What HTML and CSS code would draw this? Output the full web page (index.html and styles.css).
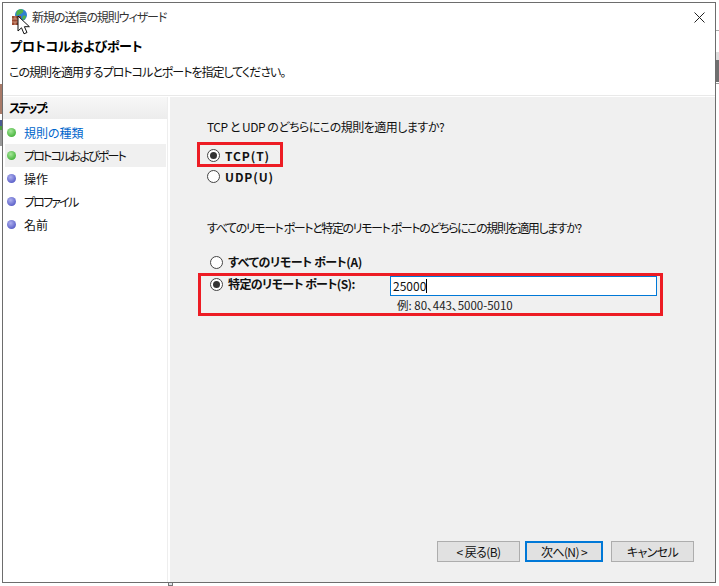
FILE: index.html
```html
<!DOCTYPE html>
<html lang="ja">
<head>
<meta charset="utf-8">
<title>新規の送信の規則ウィザード</title>
<link rel="stylesheet" href="styles.css">
</head>
<body>
<div class="bg-left"></div>
<div class="bg-right"></div>
<div class="bg-bottom"></div>
<div class="window">
  <header class="head">
    <div class="titlebar">
      <svg class="app-icon" width="17" height="17" viewBox="0 0 17 17">
        <circle cx="10" cy="6" r="6" fill="#2f7fd0"/>
        <path d="M6 2c2-2 5-2 6-1 1 2-1 3-2 4-2 0-3 1-4 2-1-1-1-3 0-5zM12 7c2-1 3 0 3 1-1 2-2 3-3 3-1-1-1-3 0-4z" fill="#4fb34a"/>
        <rect x="1" y="7" width="9" height="9" fill="#9a4a32"/>
        <path d="M1 10h9M1 13h9M4 7v3M7 10v3M4 13v3" stroke="#d9a68e" stroke-width=".8" fill="none"/>
      </svg>
      <span class="title">新規の送信の規則ウィザード</span>
      <svg class="close" width="11" height="11" viewBox="0 0 11 11"><path d="M.5.5l10 10M10.500.5l-10 10" stroke="#222" stroke-width="1" fill="none"/></svg>
    </div>
    <h1 class="page-title">プロトコルおよびポート</h1>
    <p class="page-desc">この規則を適用するプロトコルとポートを指定してください。</p>
  </header>
  <div class="body">
    <nav class="steps">
      <div class="steps-head">ステップ:</div>
      <ul class="step-list">
        <li class="step"><i class="dot green"></i><span class="link">規則の種類</span></li>
        <li class="step current"><i class="dot green"></i><span class="kana">プロトコルおよびポート</span></li>
        <li class="step"><i class="dot blue"></i>操作</li>
        <li class="step"><i class="dot blue"></i><span class="kana">プロファイル</span></li>
        <li class="step"><i class="dot blue"></i>名前</li>
      </ul>
    </nav>
    <main class="main">
      <p class="question q1">TCP と UDP のどちらにこの規則を適用しますか?</p>
      <div class="radio-row proto first"><i class="radio on"></i><span class="label latin">TCP(T)</span></div>
      <div class="radio-row proto"><i class="radio"></i><span class="label latin">UDP(U)</span></div>
      <p class="question q2">すべてのリモート ポートと特定のリモート ポートのどちらにこの規則を適用しますか?</p>
      <div class="radio-row port"><i class="radio"></i><span class="label">すべてのリモート ポート(A)</span></div>
      <div class="radio-row port specific">
        <i class="radio on"></i><span class="label wide">特定のリモート ポート(S):</span>
        <div class="input"><span>25000</span><b class="caret"></b></div>
      </div>
      <p class="example">例: 80、443、5000-5010</p>
      <footer class="buttons">
        <button class="btn">&lt; 戻る(B)</button>
        <button class="btn primary">次へ(N) &gt;</button>
        <button class="btn">キャンセル</button>
      </footer>
    </main>
  </div>
  <div class="mark mark-a"></div>
  <div class="mark mark-b"></div>
</div>
<svg class="cursor" width="14" height="21" viewBox="0 0 14 21"><path d="M1 1v15l3.500-3.200 2.500 6 3-1.300-2.600-5.800h5z" fill="#fff" stroke="#111" stroke-width="1"/></svg>
</body>
</html>
```
FILE: styles.css
```css
* { box-sizing: border-box; }
html, body { margin: 0; height: 100%; }
body {
  background: #fff;
  padding: 2px 3px 3px 2px;
  overflow: hidden;
  position: relative;
  font: 12px/16px "Noto Sans CJK JP", "Noto Sans", sans-serif;
  font-feature-settings: "palt";
  color: #111;
}
.bg-left {
  position: absolute; left: 0; top: 84px; width: 2px; height: 62px;
  background: linear-gradient(#a87a68 0 30px, #fff 30px 36px, #4a5a90 36px 42px, #4a9a40 42px 46px, #999 46px);
}
.bg-right {
  position: absolute; right: 0; top: 30px; width: 3px; height: 54px;
  background: linear-gradient(#aaa 0 1px, #fff 1px 22px, #ddd 22px 30px, #6f6f6f 30px 52px, #fff 52px 53px, #999 53px);
}
.bg-bottom {
  position: absolute; left: 168px; bottom: 0; width: 5px; height: 4px;
  border: 1px solid #777; background: #dfe3ea;
}
.window {
  position: relative;
  width: 714px; height: 581px;
  border: 1px solid #6d6d6d;
  background: #fff;
  display: flex; flex-direction: column;
}
.head { height: 93px; flex: none; border-bottom: 1px solid #e9e9e9; }
.titlebar { display: flex; align-items: center; height: 28px; padding: 0 9px 0 8px; }
.app-icon { flex: none; margin-right: 5px; }
.title { flex: 1; font-size: 12px; color: #333; margin-left: -1px; letter-spacing: -1.05px; }
.close { flex: none; margin-right: 1px; }
.page-title { margin: 6px 0 0 7px; font-size: 13px; line-height: 18px; font-weight: 700; color: #000; letter-spacing: -.2px; }
.page-desc { margin: 9px 0 0 6px; font-size: 12px; line-height: 16px; letter-spacing: -1px; }
.body { flex: 1; display: flex; min-height: 0; padding-top: 1px; }
.steps { width: 165px; flex: none; border-right: 1px solid #eee; }
.steps-head {
  height: 22px; padding: 3px 0 0 6px;
  font-weight: 700; color: #000; letter-spacing: -2px;
  background: linear-gradient(#f7f7f7, #ececec);
}
.step-list { list-style: none; margin: 2px 0 0; padding: 0; }
.step { display: flex; align-items: center; height: 23px; padding-left: 2px; margin: 0 1px 0 2px; }
.step.current { background: #f0f0f0; }
.dot { width: 9px; height: 9px; border-radius: 50%; margin-right: 8px; flex: none; }
.dot.green { background: radial-gradient(circle at 40% 35%, #a6e79a, #46b33c 75%); }
.dot.blue { background: radial-gradient(circle at 40% 35%, #aeb0ee, #5a5fc8 75%); }
.link { color: #0066cc; }
.kana { letter-spacing: -1.8px; }
.main {
  flex: 1; margin-left: 2px;
  background: #f0f0f0;
  display: flex; flex-direction: column;
  padding-left: 37px;
}
.question { margin: 0; line-height: 16px; }
.q1 { margin-top: 22px; letter-spacing: -.5px; }
.q2 { margin-top: 33px; letter-spacing: -1.4px; }
.radio-row { display: flex; align-items: center; height: 21px; }
.proto.first { margin-top: 10px; }
.port { margin-left: 3px; height: 22px; }
.q2 + .port { margin-top: 15px; }
.radio {
  width: 13px; height: 13px; border-radius: 50%; flex: none;
  border: 1px solid #444; background: #fff; margin-right: 5px; position: relative;
}
.radio.on::after {
  content: ""; position: absolute; left: 2px; top: 2px; width: 7px; height: 7px;
  border-radius: 50%; background: #333;
}
.label { font-weight: 700; color: #111; letter-spacing: -.4px; }
.label.latin { letter-spacing: .9px; }
.label.wide { width: 163px; flex: none; letter-spacing: -.6px; }
.input {
  width: 267px; height: 20px; flex: none; align-self: flex-start; margin-top: 3px; margin-left: -1px;
  border: 1px solid #0078d7; background: #fff;
  display: flex; align-items: center; padding-left: 2px;
}
.caret { width: 1px; height: 14px; background: #000; }
.example { margin: 2px 0 0; padding-left: 190px; font-size: 11.5px; line-height: 16px; color: #222; }
.buttons { margin-top: auto; display: flex; gap: 5px; margin-left: 230px; margin-bottom: 20px; }
.btn {
  width: 83px; height: 21px; padding: 0;
  background: #e1e1e1; border: 1px solid #adadad;
  font: inherit; font-feature-settings: "palt"; color: #111; letter-spacing: -.6px;
}
.btn.primary { width: 78px; border: 2px solid #0078d7; margin-right: 3px; }
.mark { position: absolute; border: 3px solid #ed1c24; pointer-events: none; }
.mark-a { left: 194px; top: 139px; width: 86px; height: 25px; }
.mark-b { left: 195px; top: 270px; width: 465px; height: 43px; }
.cursor { position: absolute; left: 17px; top: 15px; }
```
